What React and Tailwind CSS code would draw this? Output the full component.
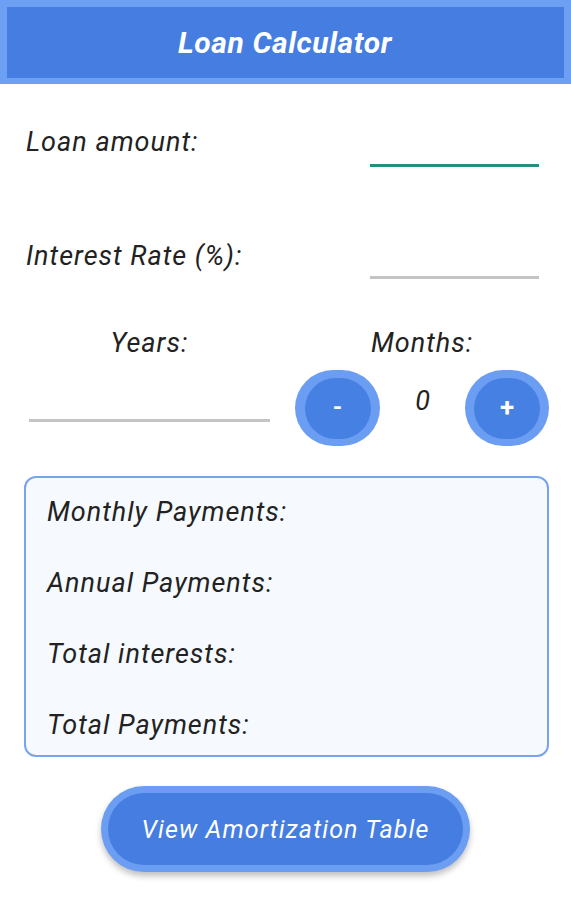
import React from "react";

const font = { fontFamily: "Roboto, 'Liberation Sans', sans-serif" };

export default function App() {
  return (
    <div className="w-[571px] h-[900px] bg-white overflow-hidden" style={font}>
      {/* Header */}
      <div className="h-[84px] bg-[#6d9ff2] pt-[7px] px-[7px] pb-[6px]">
        <div className="h-full bg-[#457de0] flex items-center justify-center pr-[1px]">
          <span className="text-white italic font-bold text-[30px] leading-none tracking-[0.6px]">
            Loan Calculator
          </span>
        </div>
      </div>

      {/* Loan amount */}
      <div className="mt-[43px] flex justify-between pl-[26px] pr-[32px]">
        <span className="italic text-[27px] leading-[30px] tracking-[1px] text-[#222]">Loan amount:</span>
        <div className="w-[169px] h-[3px] bg-[#23907f] mt-[37px]" />
      </div>

      {/* Interest rate */}
      <div className="mt-[74px] flex justify-between pl-[26px] pr-[32px]">
        <span className="italic text-[27px] leading-[30px] tracking-[1px] text-[#222]">Interest Rate (%):</span>
        <div className="w-[169px] h-[3px] bg-[#c4c4c4] mt-[35px]" />
      </div>

      {/* Years / Months labels */}
      <div className="mt-[49px] flex pl-[29px]">
        <div className="w-[241px] text-center italic text-[27px] leading-[30px] tracking-[1px] text-[#222]">Years:</div>
        <div className="ml-[25px] w-[254px] text-center italic text-[27px] leading-[30px] tracking-[1px] text-[#222]">Months:</div>
      </div>

      {/* Years input + months stepper */}
      <div className="mt-[12px] flex pl-[29px]">
        <div className="w-[241px]">
          <div className="mt-[49px] h-[3px] bg-[#c4c4c4]" />
        </div>
        <div className="ml-[25px] flex">
          <button className="w-[85px] h-[76px] rounded-full bg-[#6b9ef2] flex items-center justify-center">
            <span className="w-[66px] h-[61px] rounded-full bg-[#4680e2] flex items-center justify-center text-white font-bold text-[24px] leading-none pb-[3px]">
              -
            </span>
          </button>
          <div className="w-[85px] text-center italic text-[27px] leading-[30px] text-[#222] pt-[16px]">0</div>
          <button className="w-[84px] h-[76px] rounded-full bg-[#6b9ef2] flex items-center justify-center">
            <span className="w-[66px] h-[61px] rounded-full bg-[#4680e2] flex items-center justify-center text-white font-bold text-[26px] leading-none pb-[2px]">
              +
            </span>
          </button>
        </div>
      </div>

      {/* Results box */}
      <div className="mt-[30px] ml-[24px] w-[525px] h-[281px] rounded-[12px] border-2 border-[#78a4ef] bg-[#f6faff] pl-[21px] pt-[19px] flex flex-col gap-[41px]">
        <span className="italic text-[27px] leading-[30px] tracking-[1px] text-[#222]">Monthly Payments:</span>
        <span className="italic text-[27px] leading-[30px] tracking-[1px] text-[#222]">Annual Payments:</span>
        <span className="italic text-[27px] leading-[30px] tracking-[1px] text-[#222]">Total interests:</span>
        <span className="italic text-[27px] leading-[30px] tracking-[1px] text-[#222]">Total Payments:</span>
      </div>

      {/* Amortization button */}
      <div className="mt-[29px] flex justify-center">
        <button className="w-[369px] h-[86px] rounded-full bg-[#6b9ef2] p-[7px] shadow-[0_4px_6px_rgba(0,0,0,0.25)]">
          <span className="w-full h-full rounded-full bg-[#457de0] flex items-center justify-center text-white italic text-[25px] leading-none tracking-[1.1px]">
            View Amortization Table
          </span>
        </button>
      </div>
    </div>
  );
}
